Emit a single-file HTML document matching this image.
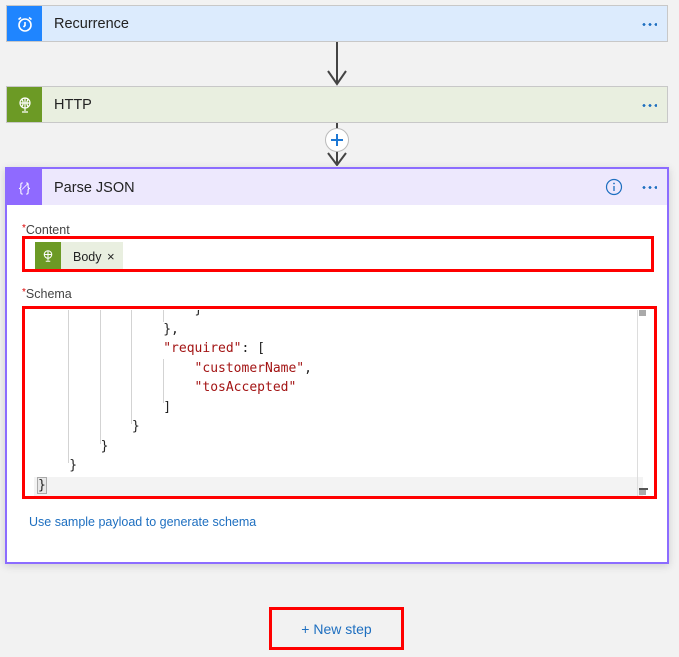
<!DOCTYPE html>
<html><head><meta charset="utf-8"><style>
*{margin:0;padding:0;box-sizing:border-box}
body{width:679px;height:657px;background:#f2f2f2;font-family:"Liberation Sans",sans-serif;position:relative;overflow:hidden}
.a{position:absolute}
.card{position:absolute;border:1px solid #c8c8c8;height:37px}
.ic{position:absolute;left:0;top:0;width:35px;height:35px;display:flex;align-items:center;justify-content:center}
.ttl{position:absolute;left:47px;top:10px;font-size:14.5px;color:#222}
.dots{position:absolute;right:10px;top:17px;width:16px;height:3px;background:radial-gradient(circle,#1e6fc0 1.3px,transparent 1.5px) 0 0/6px 3px repeat-x}
.code{position:absolute;font-family:"DejaVu Sans Mono","Liberation Mono",monospace;font-size:13px;color:#222;white-space:pre;line-height:19.5px}
.s{color:#a31515}
.g{position:absolute;width:1px;background:#d3d3d3}
</style></head><body>
<div class="card" style="left:6px;top:5px;width:662px;background:#dcebfd">
 <div class="ic" style="background:#1f85ff"><svg width="18" height="18" viewBox="0 0 18 18" fill="none" stroke="#fff" stroke-width="1.6"><circle cx="9" cy="10" r="6"/><path d="M9 7v3.5l-1.5 1.5M2.5 4.5l2.5-2M15.5 4.5l-2.5-2"/></svg></div>
 <div class="ttl">Recurrence</div><div class="dots"></div>
</div>
<div class="a" style="left:336px;top:42px;width:2px;height:42px;background:#444"></div>
<svg class="a" style="left:327px;top:70px" width="20" height="16"><path d="M1 1l9 13 9-13" fill="none" stroke="#444" stroke-width="2"/></svg>
<div class="card" style="left:6px;top:86px;width:662px;background:#e9efe0">
 <div class="ic" style="background:#6c9a25"><svg width="16" height="18" viewBox="0 0 16 18" fill="none" stroke="#fff" stroke-width="1.2"><circle cx="8" cy="7" r="5"/><path d="M3 7h10M8 2v10M5 3.5c1.5 2 1.5 5 0 7M11 3.5c-1.5 2-1.5 5 0 7M8 12v3M5 16h6"/></svg></div>
 <div class="ttl">HTTP</div><div class="dots"></div>
</div>
<div class="a" style="left:336px;top:123px;width:2px;height:40px;background:#444"></div>
<div class="a" style="left:325px;top:128px;width:24px;height:24px;border-radius:50%;background:#fff;border:1.5px solid #bbb"></div>
<div class="a" style="left:336px;top:134px;width:1.5px;height:12px;background:#1e78d4"></div>
<div class="a" style="left:331px;top:139px;width:12px;height:1.5px;background:#1e78d4"></div>
<svg class="a" style="left:327px;top:152px" width="20" height="14"><path d="M1 1l9 12 9-12" fill="none" stroke="#444" stroke-width="2"/></svg>

<div class="a" style="left:5px;top:167px;width:664px;height:397px;background:#fff;border:2px solid #8c6cff;box-shadow:0 2px 8px rgba(0,0,0,.15)">
 <div class="a" style="left:0;top:0;width:660px;height:36px;background:#ede8fd"></div>
 <div class="a" style="left:0;top:0;width:35px;height:36px;background:#8f6aff;display:flex;align-items:center;justify-content:center;color:#fff;font-size:13px">{<span style="font-size:10px;transform:rotate(30deg)">/</span>}</div>
 <div class="a" style="left:47px;top:11px;font-size:14.5px;color:#222">Parse JSON</div>
 <svg class="a" style="left:598px;top:9px" width="18" height="18"><circle cx="9" cy="9" r="7.5" fill="none" stroke="#1e6fc0" stroke-width="1.2"/><path d="M9 8v5" stroke="#1e6fc0" stroke-width="1.3"/><circle cx="9" cy="5.5" r=".9" fill="#1e6fc0"/></svg>
 <div class="dots" style="right:10px;top:17px"></div>
 <div class="a" style="left:15px;top:54px;font-size:12.5px;color:#444"><span style="color:#d00;font-size:10px;vertical-align:top">*</span>Content</div>
 <div class="a" style="left:15px;top:118px;font-size:12.5px;color:#444"><span style="color:#d00;font-size:10px;vertical-align:top">*</span>Schema</div>
 <div class="a" style="left:28px;top:73px;width:88px;height:27px;background:#e9efe0"></div>
 <div class="a" style="left:28px;top:73px;width:26px;height:27px;background:#6c9a25;display:flex;align-items:center;justify-content:center"><svg width="12" height="14" viewBox="0 0 16 18" fill="none" stroke="#fff" stroke-width="1.4"><circle cx="8" cy="7" r="5"/><path d="M3 7h10M8 2v10M8 12v3M5 16h6"/></svg></div>
 <div class="a" style="left:66px;top:80px;font-size:12.5px;color:#222">Body <span style="font-size:13px;margin-left:2px">×</span></div>
 <div class="a" style="left:27px;top:308px;width:609px;height:19px;background:#f3f3f3"></div>
 <div class="a" style="left:630px;top:141px;width:1px;height:186px;background:#ddd"></div>
 <div class="a" style="left:632px;top:141px;width:7px;height:6px;background:#aaa"></div>
 <div class="a" style="left:632px;top:320px;width:7px;height:6px;background:#aaa"></div>
 <div class="a" style="left:632px;top:319px;width:9px;height:1.5px;background:#555"></div>
 <div class="g" style="left:61px;top:141px;height:153px"></div>
 <div class="g" style="left:93px;top:141px;height:134px"></div>
 <div class="g" style="left:124px;top:141px;height:114px"></div>
 <div class="g" style="left:156px;top:141px;height:12px"></div>
 <div class="g" style="left:156px;top:190px;height:44px"></div>
 <div class="a" style="left:18px;top:141px;width:610px;height:190px;overflow:hidden">
 <div class="code" style="left:13px;top:-10px">                    }
                },
                <span class="s">"required"</span>: [
                    <span class="s">"customerName"</span>,
                    <span class="s">"tosAccepted"</span>
                ]
            }
        }
    }
<span style="background:#e8e8e8;outline:1px solid #aaa">}</span></div></div>
 <div class="a" style="left:22px;top:346px;font-size:12.5px;color:#1e6fc0">Use sample payload to generate schema</div>
</div>
<div class="a" style="left:22px;top:236px;width:632px;height:36px;border:3px solid #f00"></div>
<div class="a" style="left:22px;top:306px;width:635px;height:193px;border:3px solid #f00"></div>
<div class="a" style="left:269px;top:607px;width:135px;height:43px;border:3px solid #f00;display:flex;align-items:center;justify-content:center;font-size:14px;color:#1e6fc0">+ New step</div>
</body></html>
